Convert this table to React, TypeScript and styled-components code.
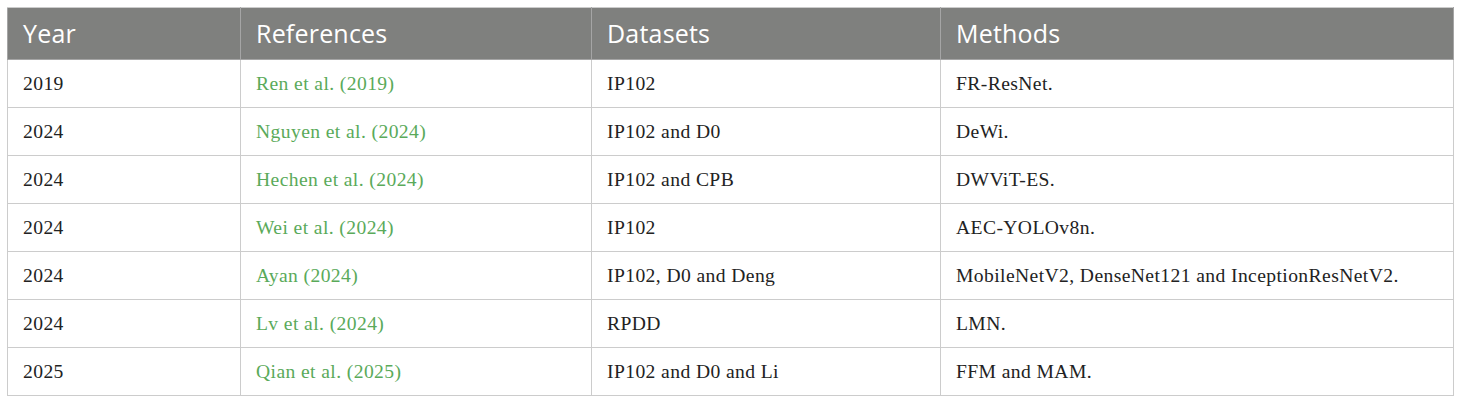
import React from "react";
import styled, { createGlobalStyle } from "styled-components";

const Global = createGlobalStyle`
  html, body { margin: 0; padding: 0; background: #ffffff; }
`;

const Page = styled.div`
  padding: 7px 8px 7px 7px;
`;

const Table = styled.table`
  width: 1446px;
  border-collapse: collapse;
  table-layout: fixed;
  border: 1px solid #cccccc;
`;

const HeadCell = styled.th`
  background: #7f807e;
  color: #ffffff;
  font-family: "Open Sans", "Noto Sans", sans-serif;
  font-weight: 400;
  font-size: 25px;
  letter-spacing: 0.2px;
  line-height: 1.2;
  text-align: left;
  height: 52px;
  padding: 0 15px 2px;
  border: 1px solid #a5a5a5;
  border-top: 1px solid #cccccc;
  vertical-align: middle;
  box-sizing: border-box;
`;

const Cell = styled.td<{ $link?: boolean }>`
  font-family: "Liberation Serif", "Times New Roman", serif;
  font-size: 19.6px;
  letter-spacing: 0.4px;
  color: ${(p) => (p.$link ? "#5aaa5a" : "#222222")};
  height: 48px;
  padding: 0 15px;
  border: 1px solid #cccccc;
  vertical-align: middle;
  box-sizing: border-box;
  white-space: nowrap;
`;

const rows = [
  ["2019", "Ren et al. (2019)", "IP102", "FR-ResNet."],
  ["2024", "Nguyen et al. (2024)", "IP102 and D0", "DeWi."],
  ["2024", "Hechen et al. (2024)", "IP102 and CPB", "DWViT-ES."],
  ["2024", "Wei et al. (2024)", "IP102", "AEC-YOLOv8n."],
  ["2024", "Ayan (2024)", "IP102, D0 and Deng", "MobileNetV2, DenseNet121 and InceptionResNetV2."],
  ["2024", "Lv et al. (2024)", "RPDD", "LMN."],
  ["2025", "Qian et al. (2025)", "IP102 and D0 and Li", "FFM and MAM."],
];

export default function App() {
  return (
    <>
      <Global />
      <Page>
        <Table>
          <colgroup>
            <col style={{ width: 233 }} />
            <col style={{ width: 351 }} />
            <col style={{ width: 349 }} />
            <col style={{ width: 513 }} />
          </colgroup>
          <thead>
            <tr>
              <HeadCell>Year</HeadCell>
              <HeadCell>References</HeadCell>
              <HeadCell>Datasets</HeadCell>
              <HeadCell>Methods</HeadCell>
            </tr>
          </thead>
          <tbody>
            {rows.map((r, i) => (
              <tr key={i}>
                <Cell>{r[0]}</Cell>
                <Cell $link>{r[1]}</Cell>
                <Cell>{r[2]}</Cell>
                <Cell>{r[3]}</Cell>
              </tr>
            ))}
          </tbody>
        </Table>
      </Page>
    </>
  );
}
